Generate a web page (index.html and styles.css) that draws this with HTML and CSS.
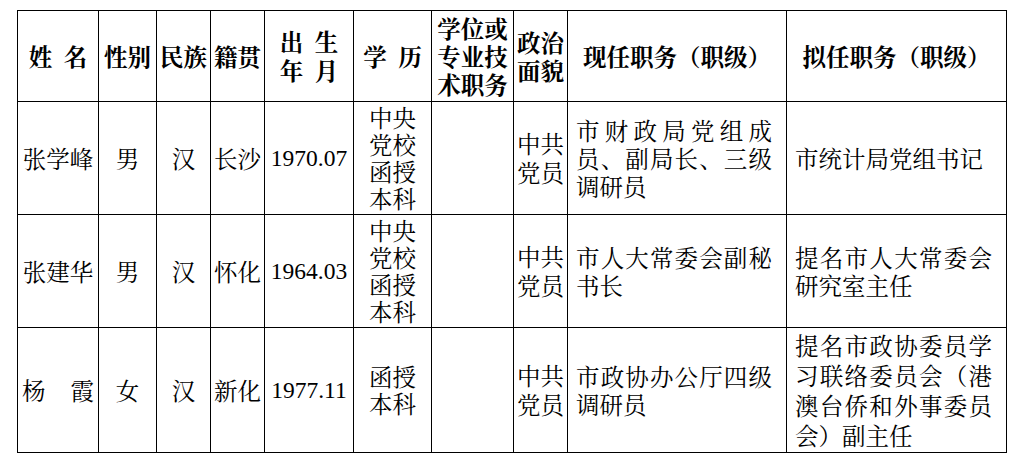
FILE: index.html
```html
<!DOCTYPE html>
<html lang="zh-CN">
<head>
<meta charset="utf-8">
<title>干部任职表</title>
<link rel="stylesheet" href="styles.css">
</head>
<body>
<table class="roster">
  <colgroup>
    <col class="c-name"><col class="c-sex"><col class="c-nation"><col class="c-origin">
    <col class="c-birth"><col class="c-edu"><col class="c-degree"><col class="c-party">
    <col class="c-now"><col class="c-new">
  </colgroup>
  <thead>
    <tr class="head">
      <th>姓&ensp;名</th>
      <th>性别</th>
      <th>民族</th>
      <th>籍贯</th>
      <th class="birth">出&ensp;生 年&ensp;月</th>
      <th>学&ensp;历</th>
      <th class="narrow">学位或专业技术职务</th>
      <th class="narrow">政治面貌</th>
      <th>现任职务（职级）</th>
      <th>拟任职务（职级）</th>
    </tr>
  </thead>
  <tbody>
    <tr class="r1">
      <td class="name">张学峰</td>
      <td>男</td>
      <td>汉</td>
      <td>长沙</td>
      <td class="num">1970.07</td>
      <td class="edu">中央党校函授本科</td>
      <td></td>
      <td class="party">中共党员</td>
      <td class="duty">市财政局党组成员、副局长、三级调研员</td>
      <td class="duty">市统计局党组书记</td>
    </tr>
    <tr class="r2">
      <td class="name">张建华</td>
      <td>男</td>
      <td>汉</td>
      <td>怀化</td>
      <td class="num">1964.03</td>
      <td class="edu">中央党校函授本科</td>
      <td></td>
      <td class="party">中共党员</td>
      <td class="duty">市人大常委会副秘书长</td>
      <td class="duty">提名市人大常委会研究室主任</td>
    </tr>
    <tr class="r3">
      <td class="name dist">杨 霞</td>
      <td>女</td>
      <td>汉</td>
      <td>新化</td>
      <td class="num">1977.11</td>
      <td class="edu">函授本科</td>
      <td></td>
      <td class="party">中共党员</td>
      <td class="duty">市政协办公厅四级调研员</td>
      <td class="duty tall">提名市政协委员学习联络委员会（港澳台侨和外事委员会）副主任</td>
    </tr>
  </tbody>
</table>
</body>
</html>
```

FILE: styles.css
```css
html, body {
  margin: 0;
  padding: 0;
  background: #ffffff;
}

body {
  font-family: "Noto Serif CJK SC", "Noto Sans CJK SC", serif;
  color: #000;
}

.roster {
  margin: 10px 0 0 17px;
  border-collapse: collapse;
  table-layout: fixed;
  width: 989px;
}

.c-name { width: 81px; }
.c-sex { width: 58px; }
.c-nation { width: 54px; }
.c-origin { width: 54px; }
.c-birth { width: 89px; }
.c-edu { width: 78px; }
.c-degree { width: 82px; }
.c-party { width: 54px; }
.c-now { width: 219px; }
.c-new { width: 220px; }

.roster th,
.roster td {
  border: 1px solid #000;
  padding: 0 2px;
  text-align: center;
  vertical-align: middle;
  overflow: hidden;
}

.roster th {
  font-size: 23.5px;
  font-weight: 700;
  line-height: 28px;
  padding: 0 1px;
}

.roster th.birth {
  padding: 0 6px;
  line-height: 29px;
}

.head { height: 91px; }
.r1, .r2 { height: 113px; }
.r3 { height: 125px; }

.roster td {
  font-size: 23.5px;
  font-weight: 400;
  line-height: 29px;
}

.roster td.name {
  padding: 0 4px;
}

.roster td.dist {
  text-align: justify;
  text-align-last: justify;
}

.roster td.num {
  font-family: "Liberation Serif", "Times New Roman", serif;
  font-size: 23.5px;
}

.roster td.edu {
  padding: 0 12px;
  line-height: 27px;
}

.roster td.duty {
  text-align: justify;
  padding: 0 14px 0 8px;
  line-height: 28px;
}

.roster td.tall {
  line-height: 30px;
}
```
